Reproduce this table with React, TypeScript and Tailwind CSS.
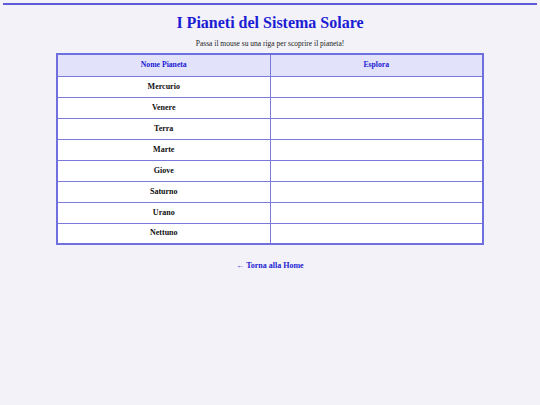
import React from "react";

const planets = ["Mercurio", "Venere", "Terra", "Marte", "Giove", "Saturno", "Urano", "Nettuno"];

export default function App() {
  return (
    <div className="min-h-[405px] w-[540px] bg-[#f3f2f8] pt-[3px] px-[3px]" style={{ fontFamily: '"Liberation Serif", serif' }}>
      <div className="h-[2px] bg-[#5b5bdc]" />
      <h1 className="mt-[8px] text-center text-[16px] font-bold leading-[20px] text-[#1c1cd4]">I Pianeti del Sistema Solare</h1>
      <p className="mt-[6px] text-center text-[7.5px] leading-[10px] text-[#222]">Passa il mouse su una riga per scoprire il pianeta!</p>
      <div className="mt-[4px] flex justify-center">
        <table className="w-[428px] border-collapse border-2 border-[#6f6fe0] bg-white">
          <thead>
            <tr className="h-[22px] bg-[#e2e2fb]">
              <th className="w-1/2 border border-[#7a7ad8] text-[7.7px] font-bold text-[#1c1cd4]">Nome Pianeta</th>
              <th className="w-1/2 border border-[#7a7ad8] text-[7.7px] font-bold text-[#1c1cd4]">Esplora</th>
            </tr>
          </thead>
          <tbody>
            {planets.map((p) => (
              <tr key={p} className="h-[21px]">
                <td className="border border-[#7a7ad8] text-center text-[8px] font-bold text-[#111]">{p}</td>
                <td className="border border-[#7a7ad8]"></td>
              </tr>
            ))}
          </tbody>
        </table>
      </div>
      <div className="mt-[6px] text-center">
        <a className="text-[8px] font-bold text-[#1c1cd4]">← Torna alla Home</a>
      </div>
    </div>
  );
}
